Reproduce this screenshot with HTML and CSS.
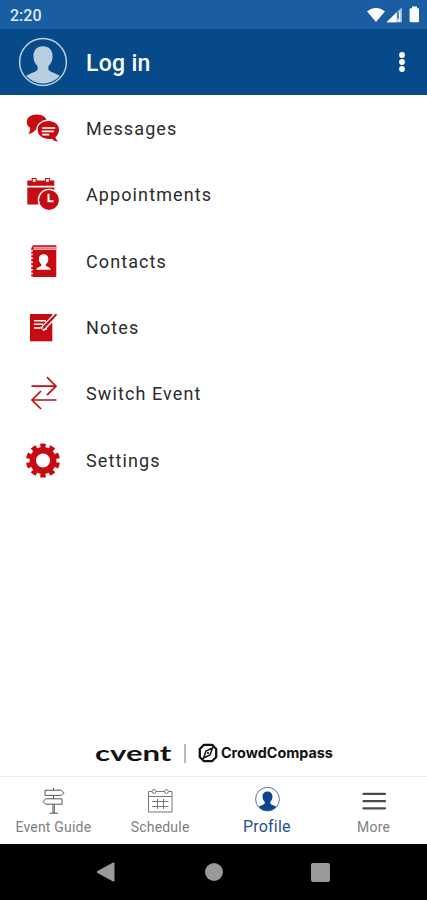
FILE: index.html
```html
<!DOCTYPE html>
<html lang="en">
<head>
<meta charset="UTF-8" />
<meta name="viewport" content="width=device-width, initial-scale=1" />
<title>Profile</title>
<link rel="stylesheet" href="styles.css">
</head>
<body>

<div class="app">
  <div class="status-bar">
    <span class="time">2:20</span>
    <svg class="status-icons" width="52" height="18" viewBox="0 0 52 18">
      <path d="M0 5.200Q9 -1.800 18 5.200L9 16Z" fill="#fff"/>
      <path d="M19.500 16.200L34.800 1.500V16.200Z" fill="#b5cae1"/>
      <path d="M19.500 16.200L29.500 6.600V16.200ZM31 7h2.200v5.500H31ZM31 13.800h2.200v2H31Z" fill="#fff"/>
      <path d="M31 6.500v6" stroke="#1a5c9e" stroke-width="1.500"/>
      <path d="M45 .5h5v1.800h1.200q1 0 1 1V15q0 1.300-1.300 1.300h-7q-1.300 0-1.300-1.300V3.300q0-1 1-1H45Z" fill="#fff"/>
    </svg>
  </div>

  <header class="header">
    <svg class="avatar" width="50" height="50" viewBox="0 0 50 50">
      <circle cx="25" cy="25" r="23.400" fill="none" stroke="#b9cee0" stroke-width="1.500"/>
      <path d="M25 9.200c6 0 9.600 4 9.600 10 0 4.500-1.700 7.600-4.200 10v3.500c2.500 3 7.800 3 11.400 6.400A22.800 22.800 0 0 1 8.200 39.100c3.600-3.400 8.900-3.400 11.400-6.400v-3.500c-2.500-2.400-4.200-5.500-4.200-10 0-6 3.600-10 9.600-10Z" fill="#b9cee0"/>
    </svg>
    <h1 class="title">Log in</h1>
    <svg class="overflow" width="8" height="22" viewBox="0 0 8 22" fill="#fff">
      <circle cx="4" cy="4" r="2.900"/><circle cx="4" cy="11" r="2.900"/><circle cx="4" cy="18" r="2.900"/>
    </svg>
  </header>

  <main class="menu">
    <a class="menu-item">
      <svg class="menu-icon" viewBox="0 0 36 36">
        <path d="M12 3.600c5.800 0 9.800 3 9.800 7.500s-4 7.800-9.500 7.800h-2.100c-1.200 2-3.600 3.600-7 3.900 1.600-1.600 2.200-3.700 2-5.700C3 15.600 1.800 13.500 1.800 11c0-4.500 4.400-7.400 10.200-7.400Z" fill="#c60c12"/>
        <path d="M23.300 10c6.200 0 10.700 3.600 10.700 8.700 0 3.100-1.500 5.700-3.500 7.200 0 1.600.9 3 3 4.600-3.100.1-5.200-1-6.300-2.800-8.300 1.300-14.600-2.800-14.600-8.900 0-5.100 4.500-8.800 10.700-8.800Z" fill="#c60c12" stroke="#fff" stroke-width="2.800" paint-order="stroke"/>
        <path d="M17.200 17h13M16.600 20.300h12.200M17.200 23.600h7" stroke="#fff" stroke-width="1.700"/>
      </svg>
      <span>Messages</span>
    </a>
    <a class="menu-item">
      <svg class="menu-icon" viewBox="0 0 36 36">
        <path d="M2.300 3.400h27v5.400h-27ZM2.300 10.500h27v17h-27Z" fill="#c60c12"/>
        <path d="M7.200 1.500v3.700h3.900V1.500ZM20.500 1.500v3.700h3.900V1.500Z" fill="#fff" stroke="#c60c12" stroke-width="1.100"/>
        <circle cx="24" cy="23" r="9.900" fill="#c60c12" stroke="#fff" stroke-width="2.800" paint-order="stroke"/>
        <path d="M23.500 16.800v7.400h5.200" fill="none" stroke="#fff" stroke-width="2"/>
      </svg>
      <span>Appointments</span>
    </a>
    <a class="menu-item">
      <svg class="menu-icon" viewBox="0 0 36 36">
        <path d="M8 1.300h23.300V33H6.300V4Z" fill="#c60c12"/>
        <path d="M8.500 4.400h22.800" stroke="#ecaaac" stroke-width="3.200"/>
        <path d="M9 4.300h22" stroke="#d9585c" stroke-width=".7"/>
        <path d="M7 6v27" stroke="#fff" stroke-width="1.800" stroke-dasharray="1.500 2.300"/>
        <path d="M18.600 10.300c3 0 4.700 2 4.700 4.700 0 2.100-.9 4-2.400 5.200v1.600c1.300 1.400 4.300 1.100 5 3.900H11.300c.7-2.800 3.700-2.500 5-3.900v-1.600c-1.500-1.200-2.400-3.100-2.400-5.200 0-2.700 1.700-4.700 4.700-4.700Z" fill="#fff"/>
      </svg>
      <span>Contacts</span>
    </a>
    <a class="menu-item">
      <svg class="menu-icon" viewBox="0 0 36 36">
        <path d="M5 4h22.300v27.300H5Z" fill="#c60c12"/>
        <path d="M9 10.700h12M9 14.300h9M9 18h6.500M18 19h4" stroke="#fff" stroke-width="1.500"/>
        <path d="M17 19.500L31.500 4.500" stroke="#fff" stroke-width="5"/>
        <path d="M17 19.500l1-3L30.800 3.500l1.500 1.600L19.500 18.500Z" fill="#c60c12"/>
        <path d="M29.700 7.800l2.500-3" stroke="#fff" stroke-width=".6"/>
      </svg>
      <span>Notes</span>
    </a>
    <a class="menu-item">
      <svg class="menu-icon" viewBox="0 0 36 36" fill="none" stroke="#c60c12" stroke-width="1.700">
        <path d="M6.500 10.200h24.300M22 1.200l9 9-9 9M31.500 24H7.200M16 15l-9 9 9 9"/>
      </svg>
      <span>Switch Event</span>
    </a>
    <a class="menu-item">
      <svg class="menu-icon" viewBox="0 0 36 36" fill="none" stroke="#c60c12">
        <circle cx="18" cy="17.500" r="10.200" stroke-width="6.400"/>
        <!-- ten teeth on the rim -->
        <circle cx="18" cy="17.500" r="14.500" stroke-width="5" pathLength="100" stroke-dasharray="5.800 4.200" stroke-dashoffset="2.900" transform="rotate(-90 18 17.500)"/>
      </svg>
      <span>Settings</span>
    </a>
  </main>

  <div class="brands">
    <span class="cvent"><span class="cvent-text">cvent</span></span>
    <span class="divider"></span>
    <svg width="20" height="20" viewBox="0 0 20 20">
      <path d="M6 1.800h8L18.200 6v8L14 18.200H6L1.800 14V6Z" fill="none" stroke="#111" stroke-width="2.300" stroke-linejoin="round"/>
      <path d="M14.500 5L12 12l-6.500 3L8 8Z" fill="none" stroke="#111" stroke-width="1.500"/>
      <circle cx="10" cy="10" r="1.100" fill="#111"/>
    </svg>
    <span class="crowd"><span class="crowd-text">CrowdCompass</span></span>
  </div>

  <nav class="tabs">
    <a class="tab">
      <svg width="28" height="28" viewBox="0 0 28 28" fill="none" stroke="#555" stroke-width="1">
        <path d="M14.500 1v1.800M14.500 8.500v3M14 17.500v8.500M15.300 17.500v8.500M10.500 26.200h8.500"/>
        <path d="M6 3.200h16.300l2.600 2.600-2.600 2.600H6ZM23 11.800H6.700l-2.800 2.700 2.800 2.700h16.300Z"/>
      </svg>
      <span>Event Guide</span>
    </a>
    <a class="tab">
      <svg width="28" height="28" viewBox="0 0 28 28" fill="none" stroke="#777" stroke-width="1">
        <path d="M6 4.500H2.500v20.500h23.500V4.500h-3.500M10 4.500h8.500M2.500 9.500h23.500"/>
        <circle cx="8" cy="4.500" r="1.900"/><circle cx="20.500" cy="4.500" r="1.900"/>
        <path d="M6 14.500h16.500M6 19.500h16.500M11.500 12v10M17.500 12v10"/>
      </svg>
      <span>Schedule</span>
    </a>
    <a class="tab active">
      <svg width="28" height="28" viewBox="0 0 28 28">
        <circle cx="14.500" cy="12.200" r="11.900" fill="none" stroke="#3f659b" stroke-width=".9"/>
        <path d="M14.500 4.400c3.200 0 5 2 5 5.100 0 2.300-.8 4-2.200 5.200v1.700c1.300 1.700 3.800 1.600 5.900 3.400A11.500 11.500 0 0 1 5.800 19.800c2.100-1.800 4.600-1.700 5.900-3.400v-1.700C10.300 13.500 9.500 11.800 9.500 9.500c0-3.100 1.800-5.100 5-5.100Z" fill="#0a468b"/>
      </svg>
      <span>Profile</span>
    </a>
    <a class="tab">
      <svg width="28" height="28" viewBox="0 0 28 28" stroke="#4b4b4b" stroke-width="2.200" stroke-linecap="round">
        <path d="M3.500 6.900h21.500M3.500 14.200h21.500M3.500 21.300h21.500"/>
      </svg>
      <span>More</span>
    </a>
  </nav>

  <div class="system-nav">
    <svg width="20" height="22" viewBox="0 0 20 22"><path d="M17.500 2.500v17L2 11Z" fill="#999" stroke="#999" stroke-width="2" stroke-linejoin="round"/></svg>
    <span class="home"></span>
    <span class="recent"></span>
  </div>
</div>

</body>
</html>
```
FILE: styles.css
```css
* {
  box-sizing: border-box;
}

body {
  margin: 0;
  background: #fff;
  font-family: Roboto, Arial, sans-serif;
  color: #2b2b2b;
}

svg {
  display: block;
  flex-shrink: 0;
}

.app {
  display: flex;
  flex-direction: column;
  height: 900px;
  overflow: hidden;
}

/* Top */
.status-bar {
  display: flex;
  justify-content: space-between;
  height: 29px;
  padding: 6px 9px 0 10px;
  background: #1a5ea1;
  color: #dce8f5;
}

.time {
  font-size: 16px;
  font-weight: 500;
  line-height: 19px;
}

.status-icons {
  margin-right: -1px;
}

.header {
  display: flex;
  align-items: center;
  height: 66px;
  padding: 0 21px 0 18px;
  background: #064a89;
  color: #fff;
}

.title {
  flex: 1;
  margin: 3px 0 0 18px;
  font-size: 23px;
  font-weight: 500;
  line-height: 28px;
  letter-spacing: 0.3px;
}

/* Menu */
.menu {
  display: flex;
  flex-direction: column;
  flex: 1;
  padding-top: 1px;
}

.menu-item {
  display: flex;
  align-items: center;
  gap: 25px;
  height: 66.3px;
  padding-left: 25px;
  font-size: 18px;
  letter-spacing: 1.1px;
}

.menu-item span {
  margin-bottom: 1px;
}

.menu-icon {
  width: 36px;
  height: 36px;
}

/* Logos */
.brands {
  display: flex;
  align-items: center;
  height: 48px;
  padding: 2px 0 0 95px;
  color: #111;
}

.cvent {
  width: 78px;
}

.cvent-text {
  display: inline-block;
  font: 700 21px/24px Lato, sans-serif;
  transform: scaleX(1.48);
  transform-origin: left;
}

.divider {
  width: 2px;
  height: 19px;
  margin: 0 12px 0 11px;
  background: #bbb;
}

.crowd {
  margin-left: 3px;
}

.crowd-text {
  display: inline-block;
  font: 700 14px/20px Inter, sans-serif;
  transform: scaleX(1.025);
  transform-origin: left;
}

/* Tabs */
.tabs {
  display: flex;
  height: 68px;
  border-top: 1px solid #eee;
}

.tab {
  display: flex;
  flex: 1;
  flex-direction: column;
  align-items: center;
  padding-top: 10px;
  color: #808080;
  font-size: 14px;
  line-height: 18px;
  letter-spacing: 0.2px;
}

.tab span {
  margin-top: 3px;
}

.tab.active {
  color: #264f8c;
  font-size: 16px;
}

.system-nav {
  display: flex;
  align-items: center;
  justify-content: space-between;
  height: 56px;
  padding: 0 97px 0 96px;
  background: #000;
}

.home {
  width: 18px;
  height: 18px;
  border-radius: 50%;
  background: #999;
}

.recent {
  width: 19px;
  height: 19px;
  border-radius: 2px;
  background: #999;
}
```
